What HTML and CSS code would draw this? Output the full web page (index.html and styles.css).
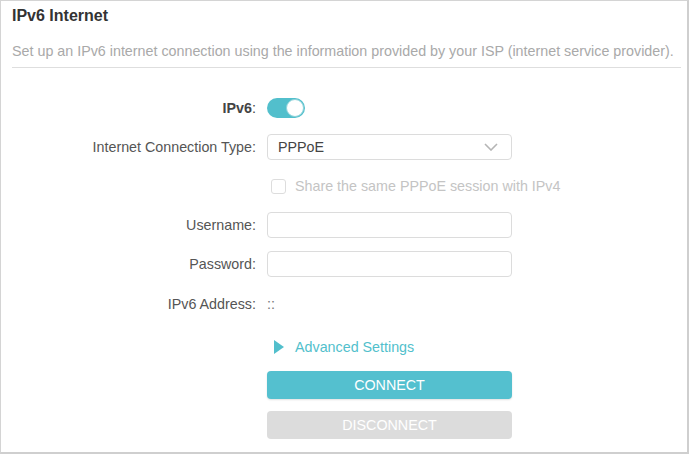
FILE: index.html
```html
<!DOCTYPE html>
<html>
<head>
<meta charset="utf-8">
<link rel="stylesheet" href="styles.css">
</head>
<body>
<div class="panel">
  <div class="header">
    <h1 class="title">IPv6 Internet</h1>
    <p class="desc">Set up an IPv6 internet connection using the information provided by your ISP (internet service provider).</p>
  </div>
  <div class="form">
    <div class="row">
      <div class="label bold">IPv6<span class="colon">:</span></div>
      <div class="control"><span class="toggle"><span class="knob"></span></span></div>
    </div>
    <div class="row">
      <div class="label">Internet Connection Type:</div>
      <div class="control">
        <div class="select">
          <span>PPPoE</span>
          <svg class="chev" width="14" height="8" viewBox="0 0 14 8"><path d="M1 1 L7 7 L13 1" fill="none" stroke="#b5b5b5" stroke-width="1.6"/></svg>
        </div>
      </div>
    </div>
    <div class="row">
      <div class="label"></div>
      <div class="control check-line"><span class="checkbox"></span><span class="check-text">Share the same PPPoE session with IPv4</span></div>
    </div>
    <div class="row">
      <div class="label">Username:</div>
      <div class="control"><div class="input"></div></div>
    </div>
    <div class="row">
      <div class="label">Password:</div>
      <div class="control"><div class="input"></div></div>
    </div>
    <div class="row addr-row">
      <div class="label">IPv6 Address:</div>
      <div class="control value">::</div>
    </div>
    <div class="row adv-row">
      <div class="label"></div>
      <div class="control adv">
        <svg class="tri" width="10" height="14" viewBox="0 0 10 14"><path d="M0 0 L10 7 L0 14 Z" fill="#52bfcc"/></svg>
        <span>Advanced Settings</span>
      </div>
    </div>
    <div class="row btn-row">
      <div class="label"></div>
      <div class="control"><div class="btn primary">CONNECT</div></div>
    </div>
    <div class="row btn-row2">
      <div class="label"></div>
      <div class="control"><div class="btn disabled">DISCONNECT</div></div>
    </div>
  </div>
</div>
</body>
</html>
```

FILE: styles.css
```css
html, body {
  margin: 0;
  padding: 0;
  background: #fff;
}
body {
  font-family: "Liberation Sans", Arial, sans-serif;
  width: 689px;
  height: 454px;
  overflow: hidden;
}
.panel {
  box-sizing: border-box;
  width: 689px;
  height: 454px;
  border-top: 1px solid #d4d4d4;
  border-left: 1px solid #d4d4d4;
  border-right: 2px solid #cfcfcf;
  border-bottom: 2px solid #cfcfcf;
}
.header {
  padding: 0 6px 0 11px;
}
.title {
  margin: 0;
  padding-top: 5px;
  font-size: 16px;
  line-height: 20px;
  font-weight: bold;
  color: #333;
}
.desc {
  margin: 16px 0 0 0;
  padding-bottom: 7px;
  font-size: 14.3px;
  line-height: 18px;
  color: #a9a9a9;
  border-bottom: 1px solid #dedede;
  white-space: nowrap;
}
.form {
  padding-top: 27px;
  display: flex;
  flex-direction: column;
  gap: 13px;
}
.row {
  display: flex;
  align-items: center;
  height: 26px;
}
.label {
  width: 255px;
  flex-shrink: 0;
  box-sizing: border-box;
  text-align: right;
  font-size: 14.3px;
  color: #555;
}
.label.bold {
  font-weight: bold;
  color: #444;
}
.colon {
  font-weight: normal;
}
.control {
  margin-left: 11px;
  width: 245px;
  flex-shrink: 0;
  display: flex;
  align-items: center;
}
.toggle {
  position: relative;
  display: inline-block;
  flex-shrink: 0;
  width: 38px;
  height: 20px;
  border-radius: 10px;
  background: #52bfcc;
}
.knob {
  position: absolute;
  right: 1px;
  top: 1px;
  width: 18px;
  height: 18px;
  box-sizing: border-box;
  border-radius: 50%;
  background: #fff;
  border: 1px solid #8fd3da;
}
.select {
  box-sizing: border-box;
  width: 245px;
  height: 26px;
  border: 1px solid #dcdcdc;
  border-radius: 4px;
  display: flex;
  align-items: center;
  justify-content: space-between;
  padding: 0 13px 0 10px;
  font-size: 14.3px;
  color: #444;
}
.chev {
  display: block;
}
.check-line {
  padding-left: 4px;
  box-sizing: border-box;
}
.checkbox {
  flex-shrink: 0;
  box-sizing: border-box;
  width: 15px;
  height: 15px;
  border: 1px solid #dddddd;
  border-radius: 3px;
  background: #fff;
}
.check-text {
  margin-left: 9px;
  font-size: 14.3px;
  color: #c4c4c4;
  white-space: nowrap;
}
.input {
  box-sizing: border-box;
  width: 245px;
  height: 26px;
  border: 1px solid #dcdcdc;
  border-radius: 4px;
}
.value {
  font-size: 14.3px;
  color: #777;
}
.addr-row {
  margin-top: 1px;
  margin-bottom: -1px;
}
.adv-row {
  margin-top: 5px;
}
.adv {
  padding-left: 7px;
  box-sizing: border-box;
  font-size: 14.3px;
  color: #52bfcc;
}
.tri {
  display: block;
  flex-shrink: 0;
  margin-right: 11px;
}
.btn-row {
  margin-top: -2px;
  height: 28px;
}
.btn-row2 {
  margin-top: -1px;
  height: 28px;
}
.btn {
  box-sizing: border-box;
  width: 245px;
  height: 28px;
  border-radius: 4px;
  display: flex;
  align-items: center;
  justify-content: center;
  font-size: 14.3px;
  color: #fff;
}
.btn.primary {
  background: #54c0cf;
  box-shadow: 0 1px 2px rgba(0,0,0,0.12);
}
.btn.disabled {
  background: #dcdcdc;
}
```
